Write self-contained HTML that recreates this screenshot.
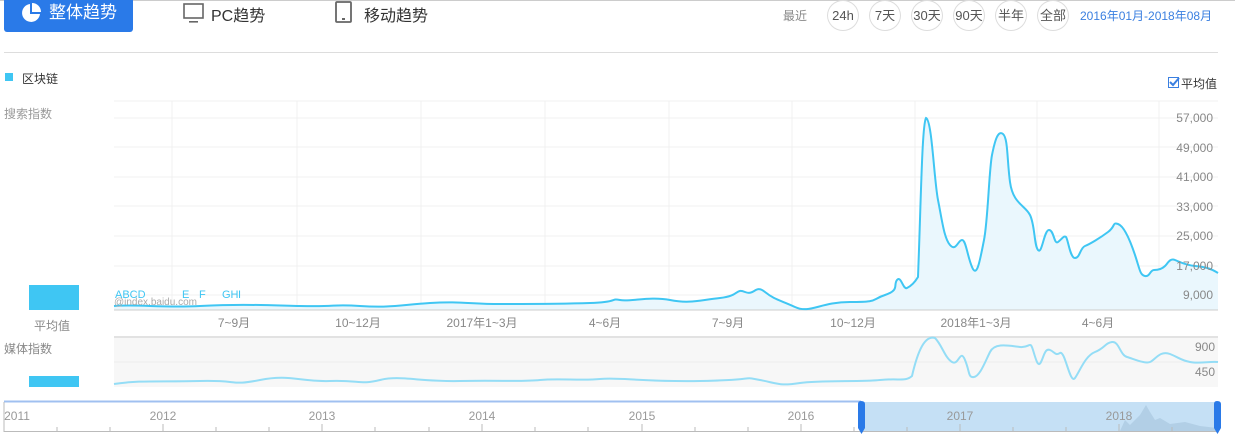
<!DOCTYPE html>
<html><head><meta charset="utf-8"><style>
body{margin:0;width:1235px;height:439px;overflow:hidden;background:#fff;font-family:"Liberation Sans","Noto Sans CJK SC",sans-serif;position:relative}
.a{position:absolute;white-space:nowrap}
.c{position:absolute;top:0;border:1px solid #ddd;border-radius:50%;font-size:13px;color:#555;text-align:center;box-sizing:border-box;width:32px;height:31px;line-height:29px}
</style></head><body>
<div class="a" style="left:0;top:0;width:1235px;height:1px;background:#ccc"></div>
<div class="a" style="left:4px;top:0;width:129px;height:32px;background:#2a7ae8;border-radius:0 0 3px 3px;color:#fff;font-size:17px;line-height:26px">
<svg style="position:absolute;left:17px;top:3px" width="20" height="20" viewBox="0 0 20 20"><path d="M9 1A9 9 0 1 0 19 11H9Z" fill="#fff"/><path d="M11 0V9H20A9 9 0 0 0 11 0Z" fill="#fff"/></svg>
<span style="position:absolute;left:45px;top:0">整体趋势</span></div>
<svg class="a" style="left:183px;top:3px" width="22" height="20" viewBox="0 0 22 20"><rect x="1" y="1" width="19" height="14" fill="none" stroke="#666" stroke-width="1.6"/><rect x="6" y="18" width="9" height="1.6" fill="#666"/></svg>
<div class="a" style="left:211px;top:2px;font-size:16px;color:#333">PC趋势</div>
<svg class="a" style="left:335px;top:1px" width="18" height="22" viewBox="0 0 18 22"><rect x="1" y="1" width="15" height="20" rx="1" fill="none" stroke="#666" stroke-width="1.8"/><rect x="7" y="17" width="3" height="2" fill="#666"/></svg>
<div class="a" style="left:364px;top:2px;font-size:16px;color:#333">移动趋势</div>
<div class="a" style="left:783px;top:7px;font-size:12px;color:#888">最近</div>
<div class="c" style="left:827px">24h</div><div class="c" style="left:869px">7天</div><div class="c" style="left:911px">30天</div><div class="c" style="left:953px">90天</div><div class="c" style="left:995px">半年</div><div class="c" style="left:1037px">全部</div>
<div class="a" style="left:1080px;top:7px;font-size:12px;color:#3a7fe0">2016年01月-2018年08月</div>
<div class="a" style="left:4px;top:52px;width:1214px;height:1px;background:#ddd"></div>
<div class="a" style="left:5px;top:73px;width:8px;height:8px;background:#3fc6f3"></div>
<div class="a" style="left:22px;top:70px;font-size:12px;color:#333">区块链</div>
<div class="a" style="left:1168px;top:77px;width:11px;height:11px;border:1px solid #3a7fe0;box-sizing:border-box"></div>
<svg class="a" style="left:1168px;top:76px" width="12" height="12"><path d="M2 6L5 9L11 2" stroke="#3a7fe0" stroke-width="2" fill="none"/></svg>
<div class="a" style="left:1181px;top:75px;font-size:12px;color:#333">平均值</div>
<div class="a" style="left:4px;top:105px;font-size:12px;color:#999">搜索指数</div>
<div class="a" style="left:29px;top:285px;width:50px;height:25px;background:#3fc6f3"></div>
<div class="a" style="left:34px;top:317px;font-size:12px;color:#888">平均值</div>
<div class="a" style="left:4px;top:340px;font-size:12px;color:#888">媒体指数</div>
<div class="a" style="left:29px;top:376px;width:50px;height:11px;background:#3fc6f3"></div>
<svg class="a" style="left:0;top:0" width="1235" height="439">
<g stroke="#f0f0f0" stroke-width="1">
<line x1="114" y1="101" x2="1218" y2="101"/>
<line x1="114" y1="118" x2="1218" y2="118"/><line x1="114" y1="147" x2="1218" y2="147"/><line x1="114" y1="177" x2="1218" y2="177"/><line x1="114" y1="206" x2="1218" y2="206"/><line x1="114" y1="236" x2="1218" y2="236"/><line x1="114" y1="266" x2="1218" y2="266"/><line x1="114" y1="295" x2="1218" y2="295"/>
<line x1="172" y1="101" x2="172" y2="310"/><line x1="297" y1="101" x2="297" y2="310"/><line x1="421" y1="101" x2="421" y2="310"/><line x1="545" y1="101" x2="545" y2="310"/><line x1="669" y1="101" x2="669" y2="310"/><line x1="792" y1="101" x2="792" y2="310"/><line x1="915" y1="101" x2="915" y2="310"/><line x1="1037" y1="101" x2="1037" y2="310"/><line x1="1159" y1="101" x2="1159" y2="310"/>
</g>
<defs><path id="ln" d="M114 306 C140 304 160 308 200 306 S260 305 300 306 S330 304 360 306 S400 305 430 303 S470 304 500 304 S560 304 590 303 S610 298 620 300 S650 296 670 300 S700 300 720 298 S735 288 745 292 S755 284 765 292 S780 300 795 307 S820 302 850 302 S870 300 885 295 S893 285 897 280 S903 290 907 288 S915 282 918 277 C921 200 922 125 926 118 C932 120 934 180 938 200 S944 238 950 245 S958 240 962 240 S967 255 972 267 S980 260 984 240 S989 170 992 155 S998 130 1003 134 S1007 160 1010 182 S1025 205 1030 215 S1034 245 1038 250 S1044 230 1049 230 S1054 245 1058 242 S1064 235 1066 237 S1070 258 1075 258 S1080 248 1085 246 S1100 238 1108 232 S1112 222 1118 224 S1130 240 1135 255 S1140 275 1145 276 S1150 270 1154 270 S1162 269 1165 266 S1170 258 1175 260 S1185 265 1195 266 S1210 268 1218 273"/></defs>
<path d="M114 306 C140 304 160 308 200 306 S260 305 300 306 S330 304 360 306 S400 305 430 303 S470 304 500 304 S560 304 590 303 S610 298 620 300 S650 296 670 300 S700 300 720 298 S735 288 745 292 S755 284 765 292 S780 300 795 307 S820 302 850 302 S870 300 885 295 S893 285 897 280 S903 290 907 288 S915 282 918 277 C921 200 922 125 926 118 C932 120 934 180 938 200 S944 238 950 245 S958 240 962 240 S967 255 972 267 S980 260 984 240 S989 170 992 155 S998 130 1003 134 S1007 160 1010 182 S1025 205 1030 215 S1034 245 1038 250 S1044 230 1049 230 S1054 245 1058 242 S1064 235 1066 237 S1070 258 1075 258 S1080 248 1085 246 S1100 238 1108 232 S1112 222 1118 224 S1130 240 1135 255 S1140 275 1145 276 S1150 270 1154 270 S1162 269 1165 266 S1170 258 1175 260 S1185 265 1195 266 S1210 268 1218 273 L1218 310 L114 310Z" fill="#eaf7fd"/>
<line x1="114" y1="310" x2="1218" y2="310" stroke="#ccc"/>
<use href="#ln" fill="none" stroke="#3fc6f3" stroke-width="2"/>
<g font-size="12" fill="#888" font-family="Liberation Sans,Noto Sans CJK SC,sans-serif">
<text x="1213" y="122" text-anchor="end">57,000</text><text x="1213" y="152" text-anchor="end">49,000</text><text x="1213" y="181" text-anchor="end">41,000</text><text x="1213" y="211" text-anchor="end">33,000</text><text x="1213" y="240" text-anchor="end">25,000</text><text x="1213" y="270" text-anchor="end">17,000</text><text x="1213" y="299" text-anchor="end">9,000</text>
<text x="234" y="327" text-anchor="middle">7~9月</text><text x="358" y="327" text-anchor="middle">10~12月</text><text x="482" y="327" text-anchor="middle">2017年1~3月</text><text x="605" y="327" text-anchor="middle">4~6月</text><text x="728" y="327" text-anchor="middle">7~9月</text><text x="853" y="327" text-anchor="middle">10~12月</text><text x="976" y="327" text-anchor="middle">2018年1~3月</text><text x="1098" y="327" text-anchor="middle">4~6月</text>
<text x="114" y="305" font-size="10" fill="#aaa">@index.baidu.com</text>
</g>
<g font-size="11" fill="#3fc6f3"><text x="115" y="298">ABCD</text><text x="182" y="298">E</text><text x="199" y="298">F</text><text x="222" y="298">GH</text><text x="238" y="298">I</text></g>
<rect x="114" y="337" width="1104" height="50" fill="#f7f7f7"/>
<line x1="114" y1="337" x2="1218" y2="337" stroke="#e2e2e2" stroke-width="2"/>
<line x1="114" y1="362" x2="1218" y2="362" stroke="#eee"/>
<path d="M114 384 C140 380 160 382 200 381 S230 386 260 380 S300 382 330 381 S360 385 380 380 S420 382 460 381 S520 382 540 380 S580 381 600 379 S640 382 700 381 S740 376 760 380 S780 386 800 383 S860 382 880 380 S905 382 912 376 C918 350 925 335 935 338 C942 345 945 358 952 362 S960 348 965 360 S968 378 974 377 S985 362 990 352 S1010 346 1020 347 S1030 340 1033 350 S1038 368 1041 362 S1045 348 1050 350 S1055 356 1060 353 S1070 385 1075 378 S1085 356 1095 352 S1105 343 1112 342 S1120 355 1127 357 S1145 364 1150 362 S1160 350 1170 354 S1180 360 1190 362 S1210 361 1218 362" fill="none" stroke="#94ddf6" stroke-width="2"/>
<g font-size="12" fill="#888"><text x="1215" y="351" text-anchor="end">900</text><text x="1215" y="376" text-anchor="end">450</text></g>
<rect x="861" y="402" width="356" height="29" fill="#c5e0f5"/>
<path d="M1120 431 L1125 420 L1130 425 L1140 415 L1146 405 L1150 412 L1155 420 L1160 418 L1170 424 L1185 422 L1200 426 L1217 428 L1217 431Z" fill="#aac8e0" opacity=".7"/>
<line x1="4" y1="401.5" x2="861" y2="401.5" stroke="#a0c0f0" stroke-width="2"/>
<line x1="4" y1="402" x2="4" y2="432" stroke="#bbb"/>
<line x1="4" y1="431.5" x2="1218" y2="431.5" stroke="#bbb"/>
<g stroke="#bbb">
<line x1="57" y1="427" x2="57" y2="431"/><line x1="110" y1="427" x2="110" y2="431"/><line x1="163" y1="424" x2="163" y2="431"/><line x1="216" y1="427" x2="216" y2="431"/><line x1="269" y1="427" x2="269" y2="431"/><line x1="322" y1="424" x2="322" y2="431"/><line x1="375" y1="427" x2="375" y2="431"/><line x1="429" y1="427" x2="429" y2="431"/><line x1="482" y1="424" x2="482" y2="431"/><line x1="535" y1="427" x2="535" y2="431"/><line x1="588" y1="427" x2="588" y2="431"/><line x1="642" y1="424" x2="642" y2="431"/><line x1="695" y1="427" x2="695" y2="431"/><line x1="748" y1="427" x2="748" y2="431"/><line x1="801" y1="424" x2="801" y2="431"/><line x1="854" y1="427" x2="854" y2="431"/><line x1="907" y1="427" x2="907" y2="431"/><line x1="960" y1="424" x2="960" y2="431"/><line x1="1013" y1="427" x2="1013" y2="431"/><line x1="1066" y1="427" x2="1066" y2="431"/><line x1="1119" y1="424" x2="1119" y2="431"/><line x1="1172" y1="427" x2="1172" y2="431"/>
</g>
<g font-size="12" fill="#999" text-anchor="middle"><text x="17" y="420">2011</text><text x="163" y="420">2012</text><text x="322" y="420">2013</text><text x="482" y="420">2014</text><text x="642" y="420">2015</text><text x="801" y="420">2016</text><text x="960" y="420">2017</text><text x="1119" y="420">2018</text></g>
<path d="M858 404 Q858 401 861 401 Q865 401 865 404 V428 L861.5 434 L858 428Z" fill="#2a7ae8"/>
<path d="M1214 404 Q1214 401 1217 401 Q1221 401 1221 404 V428 L1217.5 434 L1214 428Z" fill="#2a7ae8"/>
</svg>
</body></html>
